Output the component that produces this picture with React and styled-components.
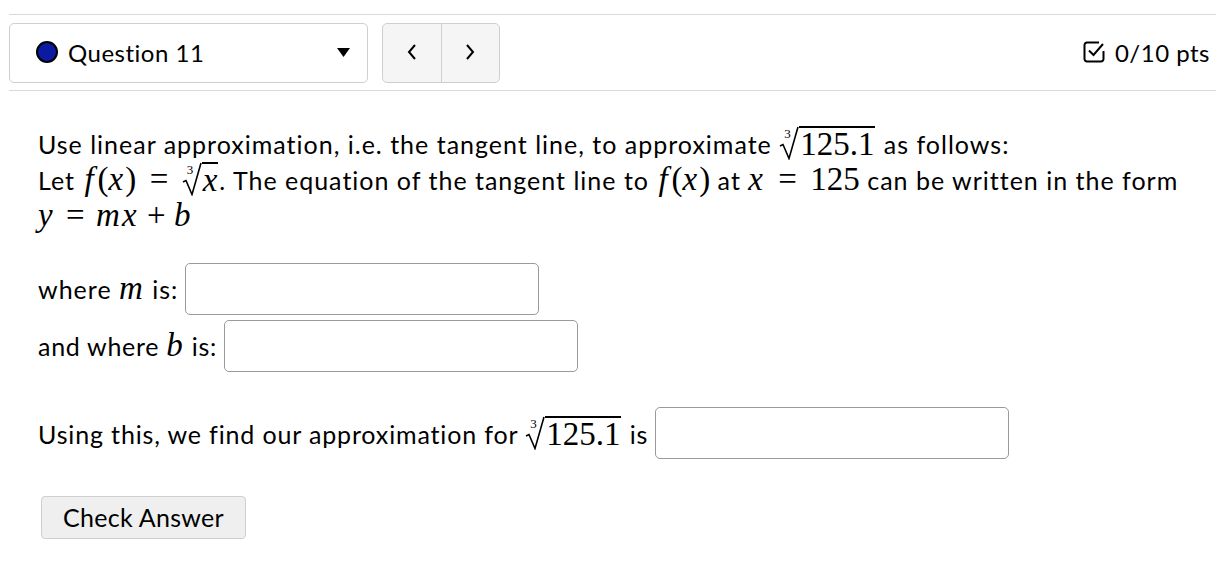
import React from 'react';
import styled, { createGlobalStyle } from 'styled-components';

const GlobalStyle = createGlobalStyle`
  body {
    margin: 0;
    background: #fff;
    color: #000;
    font-family: Lato, "Open Sans", sans-serif;
    font-variant-ligatures: none;
  }
`;

const Page = styled.div`
  width: 1216px;
  overflow: hidden;
`;

const Header = styled.header`
  margin: 14px 0 0 9px;
  padding: 8px 6px 7px 0;
  border-top: 1px solid #d9d9d9;
  border-bottom: 1px solid #d9d9d9;
  display: flex;
  align-items: center;
  justify-content: space-between;
  font-size: 24px;
  letter-spacing: 0.5px;
`;

const Left = styled.div`
  display: flex;
  align-items: center;
  gap: 14px;
`;

const Select = styled.div`
  box-sizing: border-box;
  width: 359px;
  height: 60px;
  border: 1px solid #cfcfcf;
  border-radius: 5px;
  display: flex;
  align-items: center;
  padding: 0 17px 2px 25px;
`;

const Title = styled.span`
  flex: 1;
  margin-left: 9px;
`;

const Nav = styled.div`
  box-sizing: border-box;
  width: 118px;
  height: 60px;
  border: 1px solid #cfcfcf;
  border-radius: 5px;
  background: #f5f5f5;
  display: flex;
`;

const NavButton = styled.div`
  flex: 1;
  display: flex;
  align-items: center;
  justify-content: center;
  padding-bottom: 3px;
  border-left: ${(p) => (p.divider ? '1px solid #cfcfcf' : 'none')};
`;

const Points = styled.div`
  display: flex;
  align-items: center;
  gap: 9px;
  padding-bottom: 2px;
`;

const Body = styled.main`
  padding: 35px 0 0 38px;
  font-size: 25px;
  letter-spacing: 1px;
`;

const Para = styled.p`
  margin: 0 0 29px;
  line-height: 36px;
`;

const Row = styled.div`
  display: flex;
  align-items: center;
  gap: 7px;
  margin-top: ${(p) => p.gap || 0}px;
`;

const Label = styled.span`
  letter-spacing: ${(p) => p.spacing || 1}px;
`;

const Input = styled.input`
  box-sizing: border-box;
  width: 354px;
  height: 52px;
  border: 1px solid #9a9a9a;
  border-radius: 5px;
  background: #fff;
  outline: none;
`;

const Button = styled.button`
  margin: 37px 0 0 3px;
  box-sizing: border-box;
  width: 205px;
  height: 43px;
  padding: 0 0 2px;
  border: 1px solid #cfcfcf;
  border-radius: 4px;
  background: #efefef;
  color: #000;
  font-family: Lato, sans-serif;
  font-size: 25px;
  letter-spacing: 0.3px;
`;

const M = styled.span`
  font-family: "Liberation Serif", "DejaVu Serif", serif;
  font-style: ${(p) => (p.up ? 'normal' : 'italic')};
  font-size: 33px;
  line-height: 0;
  letter-spacing: ${(p) => (p.up ? 0 : 2)}px;
  padding: 0 ${(p) => p.pad || 0}px;
`;

const Root = styled.span`
  display: inline-flex;
  position: relative;
  margin-right: 1px;
  vertical-align: -6px;
  letter-spacing: 0;
  line-height: 0;
`;

const Index = styled.span`
  position: absolute;
  left: 5px;
  top: 1px;
  font-family: "Liberation Serif", serif;
  font-size: 13px;
  line-height: 13px;
`;

const Radicand = styled.span`
  border-top: 2px solid #000;
  font-family: "Liberation Serif", "DejaVu Serif", serif;
  font-style: ${(p) => (p.it ? 'italic' : 'normal')};
  font-size: 33px;
  line-height: 32px;
  padding: 0 1px;
`;

const Dot = () => (
  <svg width="24" height="24" viewBox="0 0 24 24">
    <circle cx="12" cy="12" r="10" fill="#0b1aa0" stroke="#000" strokeWidth="2" />
  </svg>
);

const Caret = () => (
  <svg width="13" height="9" viewBox="0 0 13 9">
    <path d="M0 0h13L6.5 9z" fill="#000" />
  </svg>
);

const Chevron = ({ dir }) => (
  <svg width="12" height="18" viewBox="0 0 12 18">
    <path
      d={dir === 'left' ? 'M9 2L3 9l6 7' : 'M3 2l6 7-6 7'}
      fill="none"
      stroke="#000"
      strokeWidth="2"
    />
  </svg>
);

const CheckBox = () => (
  <svg width="24" height="24" viewBox="0 0 24 24">
    <path
      d="M17 2.5H5A2.5 2.5 0 0 0 2.5 5v14A2.5 2.5 0 0 0 5 21.5h14a2.5 2.5 0 0 0 2.5-2.5v-8"
      fill="none"
      stroke="#000"
      strokeWidth="2"
    />
    <path d="M7 10.5l4.5 4.5L21 4" fill="none" stroke="#000" strokeWidth="2" />
  </svg>
);

const Radical = () => (
  <svg width="20" height="34" viewBox="0 0 20 34">
    <path d="M1 20l3-1.5 6 14L19 1" fill="none" stroke="#000" strokeWidth="1.6" />
  </svg>
);

const CubeRoot = ({ children, it }) => (
  <Root>
    <Index>3</Index>
    <Radical />
    <Radicand it={it}>{children}</Radicand>
  </Root>
);

const App = () => (
  <Page>
    <GlobalStyle />
    <Header>
      <Left>
        <Select>
          <Dot />
          <Title>Question 11</Title>
          <Caret />
        </Select>
        <Nav>
          <NavButton>
            <Chevron dir="left" />
          </NavButton>
          <NavButton divider>
            <Chevron dir="right" />
          </NavButton>
        </Nav>
      </Left>
      <Points>
        <CheckBox />
        0/10 pts
      </Points>
    </Header>
    <Body>
      <Para>
        Use linear approximation, i.e. the tangent line, to approximate{' '}
        <CubeRoot>125.1</CubeRoot> as follows:
        <br />
        Let <M pad={2}>f</M>
        <M up>(</M>
        <M>x</M>
        <M up>)</M> <M up pad={6}>=</M> <CubeRoot it>x</CubeRoot>. The equation of the
        tangent line to <M pad={2}>f</M>
        <M up>(</M>
        <M>x</M>
        <M up>)</M> at <M>x</M> <M up pad={6}>=</M> <M up>125</M> can be written in the form
        <br />
        <M>y</M> <M up pad={4}>=</M> <M>mx</M> <M up pad={1}>+</M> <M>b</M>
      </Para>
      <Row>
        <Label>
          where <M>m</M> is:
        </Label>
        <Input />
      </Row>
      <Row gap={5}>
        <Label spacing={0.7}>
          and where <M>b</M> is:
        </Label>
        <Input />
      </Row>
      <Row gap={35}>
        <Label spacing={0.85}>
          Using this, we find our approximation for <CubeRoot>125.1</CubeRoot> is
        </Label>
        <Input />
      </Row>
      <Button>Check Answer</Button>
    </Body>
  </Page>
);

export default App;
